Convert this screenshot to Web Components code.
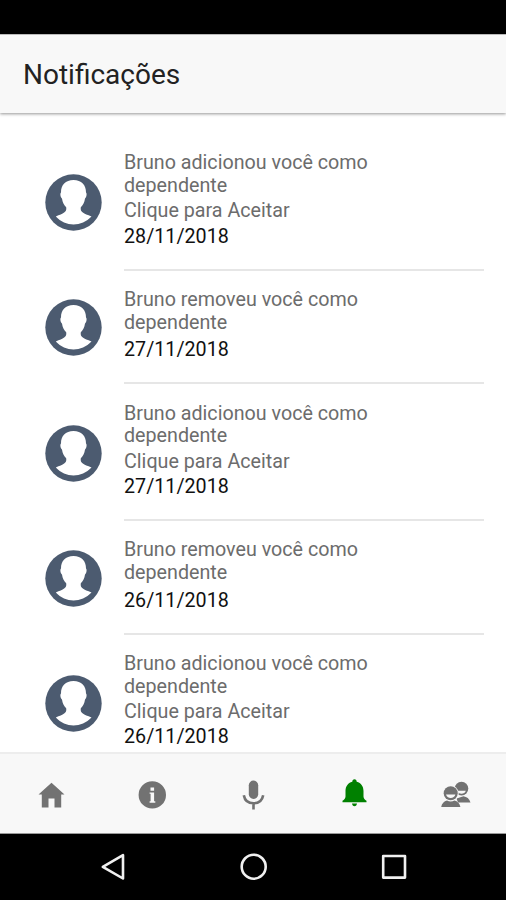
<!DOCTYPE html>
<html lang="pt-BR">
<head>
<meta charset="utf-8">
<meta name="viewport" content="width=device-width, initial-scale=1">
<title>Notificações</title>
<style>
  html, body { margin: 0; height: 100%; background: #fff; overflow: hidden; }
  body { font-family: Roboto, "Liberation Sans", sans-serif; }
</style>
</head>
<body>
<phone-screen>
  <page-header slot="header">Notificações</page-header>
  <notice-item date="28/11/2018" action="Clique para Aceitar">Bruno adicionou você como dependente</notice-item>
  <notice-item date="27/11/2018">Bruno removeu você como dependente</notice-item>
  <notice-item date="27/11/2018" action="Clique para Aceitar">Bruno adicionou você como dependente</notice-item>
  <notice-item date="26/11/2018">Bruno removeu você como dependente</notice-item>
  <notice-item date="26/11/2018" action="Clique para Aceitar">Bruno adicionou você como dependente</notice-item>
  <tab-bar slot="tabs" active="bell"></tab-bar>
  <system-nav slot="nav"></system-nav>
</phone-screen>

<script>
// <phone-screen> slots: header, default (scrolling list), tabs, nav
class PhoneScreen extends HTMLElement {
  connectedCallback() {
    const shadow = this.attachShadow({ mode: "open" });
    shadow.innerHTML = `
      <style>
        :host { display: flex; flex-direction: column; height: 900px; background: #fff; }
        .status { flex: none; height: 34px; background: #000; }
        .list { flex: 1; min-height: 0; overflow: hidden; padding: 21px 22px 0 0; }
      </style>
      <div class="status"></div>
      <slot name="header"></slot>
      <div class="list"><slot></slot></div>
      <slot name="tabs"></slot>
      <slot name="nav"></slot>`;
  }
}

class PageHeader extends HTMLElement {
  connectedCallback() {
    const shadow = this.attachShadow({ mode: "open" });
    shadow.innerHTML = `
      <style>
        :host {
          display: flex; align-items: center; flex: none; height: 79px;
          box-sizing: border-box; padding: 1px 23px 0; background: #f8f8f8;
          border-top: 1px solid #bbb;
          box-shadow: 0 1px 3px rgba(0,0,0,.42);
        }
        h1 { margin: 0; font-size: 28px; line-height: 32px; font-weight: 450; color: #222; }
      </style>
      <h1><slot></slot></h1>`;
  }
}

// <notice-item date="28/11/2018" action="Clique para Aceitar">message</notice-item>
class NoticeItem extends HTMLElement {
  connectedCallback() {
    const shadow = this.attachShadow({ mode: "open" });
    const date = this.getAttribute("date") || "";
    const action = this.getAttribute("action") || "";
    shadow.innerHTML = `
      <style>
        :host { display: flex; align-items: stretch; height: ${action ? "136.5px" : "113.75px"}; }
        .avatar { display: flex; align-items: center; flex: none; width: 79px; padding: 1px 0 0 45px; }
        .body { flex: 1; box-sizing: border-box; padding-top: 18.4px; border-bottom: 2px solid #e6e6e6; }
        :host(:last-of-type) .body { border-bottom: 0; }
        p { margin: 0; max-width: 290px; font-size: 19.7px; line-height: 22.7px; color: #6c6c6c; }
        .action { margin-top: 2.6px; }
        .date { margin-top: ${action ? "2.6px" : "5.2px"}; color: #111; }
      </style>
      <div class="avatar">
        <svg width="57" height="57" viewBox="0 0 57 57">
          <circle cx="28.5" cy="28.5" r="28.2" fill="#4c5b70"/>
          <path fill="#fff" d="M28.500 6C20.500 6 15.800 11 16 18.500C14.800 19.800 15.500 23.500 17 24.500C17.500 28.500 19 31 21.200 33.300C22 38.500 18.500 39.300 10.800 42.500C20.500 53 36.500 53 46.500 42.500C38.500 39.300 35 38.500 35.800 33.300C38 31 39.500 28.500 40 24.500C41.500 23.500 42.200 19.800 41 18.500C41.200 11 36.500 6 28.500 6Z"/>
        </svg>
      </div>
      <div class="body">
        <p><slot></slot></p>
        ${action ? `<p class="action">${action}</p>` : ""}
        <p class="date">${date}</p>
      </div>`;
  }
}

const TAB_ICONS = {
  home: `<path d="M20.500 7.800L33.500 19.500H30.200V32.500H23.500V23.500H17.500V32.500H10.800V19.500H7.500Z"/>`,
  info: `<path fill-rule="evenodd" d="M20.300 6.200a13.700 13.700 0 1 0 0 27.400a13.700 13.700 0 1 0 0-27.400ZM18.500 12.400h3.600v3.300h-3.600ZM17.600 17.500h4.500v8.800h1.200v1.500h-5.700v-1.500h1v-7.500h-1Z"/>`,
  mic: `<rect x="15.800" y="5.500" width="9.400" height="18.500" rx="4.700"/>
    <path d="M10.800 20.200C11.800 25.700 15.500 28.300 20.500 28.300S29.200 25.700 30.200 20.200M20.500 28.300V34.500" fill="none" stroke="currentColor" stroke-width="2.600"/>`,
  bell: `<path d="M20.500 4.300c1.400 0 2.200 1 2.200 2.400c4.600 1.200 6.800 4.800 6.800 9.300v5.500c0 2 1.400 3.300 3 4.200v1.500H8.500v-1.500c1.600-.9 3-2.200 3-4.200V16c0-4.500 2.200-8.100 6.800-9.300c0-1.400.8-2.400 2.200-2.400ZM18 28.600h5c-.2 1.700-1.100 2.600-2.500 2.600s-2.300-.9-2.500-2.600Z"/>`,
  people: `<circle cx="26.500" cy="13.600" r="6.800"/>
    <path d="M21.500 23.500l7-2.300c3.200.5 5.900 2.400 7 6.200H23Z"/>
    <path fill="#f8f8f8" d="M22 15.800h8.800c-.7 2.200-2.300 3-4.300 3s-3.800-.8-4.500-3Z"/>
    <circle cx="15.700" cy="18.500" r="8" fill="#f8f8f8"/>
    <circle cx="15.700" cy="18.300" r="7"/>
    <path fill="#f8f8f8" d="M11 19.500h9.400c-.6 2.300-2.400 3.500-4.700 3.500S11.600 21.800 11 19.500Z"/>
    <path d="M6.200 32c.6-3.900 2.800-5.800 5.800-6.600c2.200 1.500 5.200 1.500 7.400 0c3.200.8 5.300 2.700 6 6.600Z"/>`,
};

// <tab-bar active="bell"></tab-bar>
class TabBar extends HTMLElement {
  connectedCallback() {
    const shadow = this.attachShadow({ mode: "open" });
    const active = this.getAttribute("active") || "";
    const tabs = Object.entries(TAB_ICONS).map(([name, icon]) => `
      <div class="tab${name === active ? " active" : ""}">
        <svg width="40" height="40" viewBox="0 0 40 40" fill="currentColor">${icon}</svg>
      </div>`).join("");
    shadow.innerHTML = `
      <style>
        :host {
          display: grid; grid-template-columns: repeat(5, 1fr); flex: none; height: 82px;
          box-sizing: border-box; background: #f8f8f8;
          border-top: 2px solid #ededed; border-bottom: 1px solid #999;
        }
        .tab { display: flex; align-items: center; justify-content: center; color: #727272; padding-top: 2px; }
        .tab.active { color: #008000; }
      </style>
      ${tabs}`;
  }
}

class SystemNav extends HTMLElement {
  connectedCallback() {
    const shadow = this.attachShadow({ mode: "open" });
    shadow.innerHTML = `
      <style>
        :host {
          display: flex; align-items: center; justify-content: space-between; flex: none;
          height: 66px; box-sizing: border-box; padding: 0 97px 0 98px; background: #000;
        }
        svg { fill: none; stroke: #f0f0f0; stroke-width: 2.600; stroke-linejoin: round; }
      </style>
      <svg width="30" height="30" viewBox="0 0 30 30"><path d="M25 3.200V26.500L4.800 14.800Z"/></svg>
      <svg width="30" height="30" viewBox="0 0 30 30"><circle cx="14.700" cy="14.700" r="12"/></svg>
      <svg width="30" height="30" viewBox="0 0 30 30"><rect x="4.200" y="4" width="21.800" height="21.600"/></svg>`;
  }
}

customElements.define("phone-screen", PhoneScreen);
customElements.define("page-header", PageHeader);
customElements.define("notice-item", NoticeItem);
customElements.define("tab-bar", TabBar);
customElements.define("system-nav", SystemNav);
</script>
</body>
</html>
